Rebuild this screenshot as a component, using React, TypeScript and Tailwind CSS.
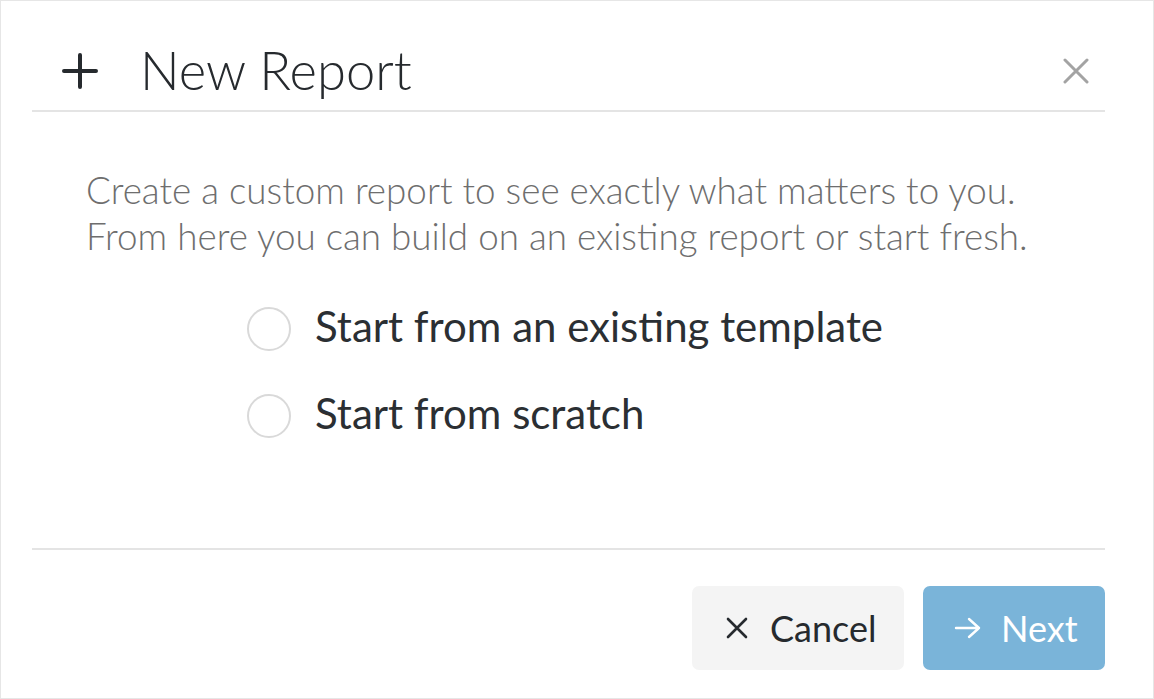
export default function App() {
    return (
        <div className="flex h-[699px] w-[1154px] flex-col border border-[#e6e6e6] bg-white pl-[31px] pr-[48px] font-['Lato','Liberation_Sans',sans-serif]">
            {/* header */}
            <div className="flex h-[111px] shrink-0 items-center border-b-2 border-[#e4e4e4] pt-[31px] pb-[1px]">
                <svg width="36" height="36" viewBox="0 0 36 36" className="ml-[30px] text-[#262a2e]">
                    <path d="M18 2 V34 M2 18 H34" stroke="currentColor" strokeWidth="4" strokeLinecap="round" />
                </svg>
                <h1 className="ml-[42px] text-[52.5px] leading-none font-light text-[#262a2e]">New Report</h1>
                <button className="ml-auto mr-[16px] text-[#a3a3a3]">
                    <svg width="26" height="26" viewBox="0 0 26 26">
                        <path d="M2 2 L24 24 M24 2 L2 24" stroke="currentColor" strokeWidth="3" strokeLinecap="round" />
                    </svg>
                </button>
            </div>

            {/* body */}
            <div className="flex flex-1 flex-col">
                <p className="mt-[55px] pl-[54px] text-[36.8px] leading-[46px] font-light text-[#6e6e6e]">
                    Create a custom report to see exactly what matters to you.
                    <br />
                    From here you can build on an existing report or start fresh.
                </p>

                <div className="mt-[48px] flex flex-col gap-[43px] pl-[215px]">
                    {['Start from an existing template', 'Start from scratch'].map((label) => (
                        <label key={label} className="flex h-[44px] items-center gap-[24px]">
                            <span className="h-[44px] w-[44px] shrink-0 rounded-full border-2 border-[#d9d9d9] bg-white" />
                            <span className="pb-[6px] text-[42px] leading-none text-[#2b2f33]">{label}</span>
                        </label>
                    ))}
                </div>
            </div>

            {/* footer */}
            <div className="flex shrink-0 justify-end gap-[19px] border-t-2 border-[#e4e4e4] pt-[36px] pb-[28px]">
                <button className="flex h-[84px] w-[212px] items-center gap-[22px] rounded-[7px] bg-[#f4f4f4] pl-[34px] text-[36px] text-[#262a2e]">
                    <svg width="22" height="22" viewBox="0 0 22 22">
                        <path d="M2 2 L20 20 M20 2 L2 20" stroke="currentColor" strokeWidth="2.6" strokeLinecap="round" />
                    </svg>
                    <span className="leading-none">Cancel</span>
                </button>
                <button className="flex h-[84px] w-[182px] items-center gap-[20px] rounded-[7px] bg-[#7ab4d9] pl-[31px] text-[36px] text-white">
                    <svg width="27" height="22" viewBox="0 0 27 22">
                        <path d="M2 11 H25 M15 2 L25 11 L15 20" stroke="currentColor" strokeWidth="2.4" strokeLinecap="round" strokeLinejoin="round" fill="none" />
                    </svg>
                    <span className="leading-none">Next</span>
                </button>
            </div>
        </div>
    );
}
